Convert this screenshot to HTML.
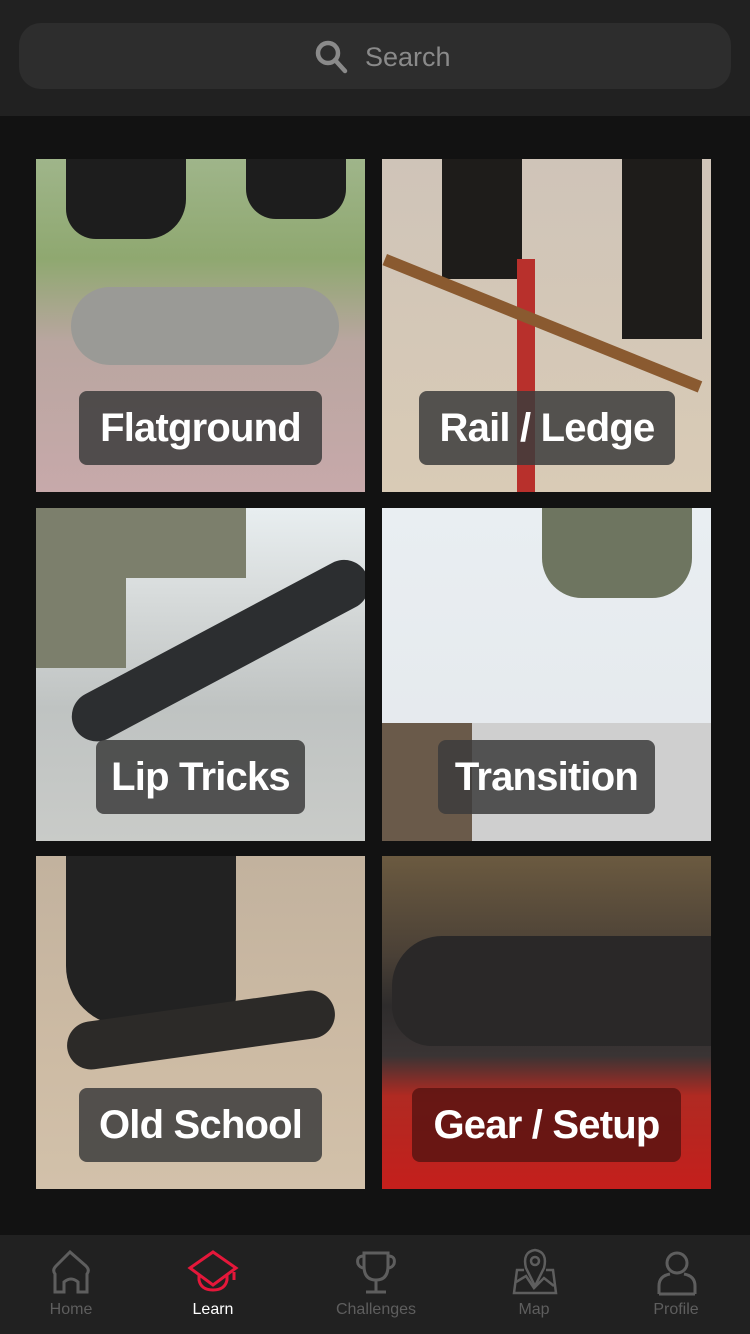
<!DOCTYPE html>
<html><head><meta charset="utf-8"><style>
*{margin:0;padding:0;box-sizing:border-box}
body{width:750px;height:1334px;background:#121212;font-family:"Liberation Sans",sans-serif;position:relative;overflow:hidden}
.hdr{position:absolute;left:0;top:0;width:750px;height:116px;background:#212121}
.sb{position:absolute;left:19px;top:23px;width:712px;height:66px;border-radius:22px;background:#2d2d2d}
.sb span{position:absolute;left:346px;top:19px;font-size:27px;color:#8a8a8a}
.t{position:absolute;width:329px;height:333px;overflow:hidden}
.l{position:absolute;height:74px;border-radius:8px;background:rgba(60,60,60,.85);color:#fff;font-weight:bold;font-size:40px;letter-spacing:-0.8px;text-align:center;line-height:74px;white-space:nowrap}
.tab{position:absolute;left:0;top:1235px;width:750px;height:99px;background:#212121}
.tl{position:absolute;top:1301px;font-size:16px;color:#5e5e5e;width:120px;text-align:center}
svg{position:absolute}
</style></head><body>
<div class="hdr"><div class="sb">
<svg style="left:295px;top:16px" width="36" height="36" viewBox="0 0 36 36"><circle cx="14" cy="14" r="10" fill="none" stroke="#8a8a8a" stroke-width="4.5"/><path d="M21 21 L31 32" stroke="#8a8a8a" stroke-width="4.5" stroke-linecap="round"/></svg>
<span>Search</span></div></div>

<div class="t" style="left:36px;top:159px;background:linear-gradient(#9fb58a 0%,#8fa870 30%,#b9a6a0 55%,#c7a9aa 100%)">
<div style="position:absolute;left:35px;top:128px;width:268px;height:78px;border-radius:40px;background:#9a9a96"></div>
<div style="position:absolute;left:30px;top:0;width:120px;height:80px;background:#1d1d1d;border-radius:0 0 40px 30px"></div>
<div style="position:absolute;left:210px;top:0;width:100px;height:60px;background:#1d1d1d;border-radius:0 0 30px 30px"></div>
</div>
<div class="t" style="left:382px;top:159px;background:linear-gradient(#cfc4b8,#d9cbb6)">
<div style="position:absolute;left:60px;top:0;width:80px;height:120px;background:#1e1c1a"></div>
<div style="position:absolute;left:240px;top:0;width:80px;height:180px;background:#1e1c1a"></div>
<div style="position:absolute;left:135px;top:100px;width:18px;height:233px;background:#b8302c"></div>
<div style="position:absolute;width:340px;height:12px;background:#8a5a30;transform:rotate(22deg);transform-origin:0 0;left:5px;top:95px"></div>
</div>
<div class="t" style="left:36px;top:508px;background:linear-gradient(#e8eef0 0%,#d8dcdc 25%,#bfc3c2 60%,#c9cbc8 100%)">
<div style="position:absolute;left:0;top:0;width:90px;height:160px;background:#7c7f6c"></div>
<div style="position:absolute;left:90px;top:0;width:120px;height:70px;background:#7c7f6c"></div>
<div style="position:absolute;left:20px;top:120px;width:330px;height:50px;background:#2c2e30;border-radius:25px;transform:rotate(-28deg);transform-origin:160px 25px"></div>
</div>
<div class="t" style="left:382px;top:508px;background:linear-gradient(#e9eef2,#e4e8eb)">
<div style="position:absolute;left:0;top:215px;width:90px;height:118px;background:#6a5a4a"></div>
<div style="position:absolute;left:90px;top:215px;width:239px;height:118px;background:#cfcfcf"></div>
<div style="position:absolute;left:160px;top:0;width:150px;height:90px;background:#6e7560;border-radius:0 0 40px 40px"></div>
</div>
<div class="t" style="left:36px;top:856px;background:linear-gradient(#c2b29e,#cdbba4 60%,#d2c1aa)">
<div style="position:absolute;left:30px;top:0;width:170px;height:170px;background:#222;border-radius:0 0 30px 60px"></div>
<div style="position:absolute;left:30px;top:150px;width:270px;height:48px;background:#2c2a28;border-radius:24px;transform:rotate(-8deg)"></div>
</div>
<div class="t" style="left:382px;top:856px;background:linear-gradient(#6b5a40 0%,#4a4036 30%,#2e2c2c 45%,#3a3434 60%,#b02a22 72%,#c41f1c 100%)">
<div style="position:absolute;left:10px;top:80px;width:320px;height:110px;background:#2a2828;border-radius:50px 0 0 40px"></div>
</div>

<div class="l" style="left:79px;top:391px;width:243px">Flatground</div>
<div class="l" style="left:419px;top:391px;width:256px">Rail / Ledge</div>
<div class="l" style="left:96px;top:740px;width:209px">Lip Tricks</div>
<div class="l" style="left:438px;top:740px;width:217px">Transition</div>
<div class="l" style="left:79px;top:1088px;width:243px">Old School</div>
<div class="l" style="left:412px;top:1088px;width:269px;background:rgba(90,20,18,.85)">Gear / Setup</div>

<div class="tab"></div>
<svg style="left:50px;top:1250px" width="44" height="46" viewBox="0 0 44 46" fill="none" stroke="#5e5e5e" stroke-width="3"><path d="M5 42 L5 24 Q2 20 6 16 L20 2 L36 16 Q40 20 37 24 L37 42 L28 42 L28 32 Q21 26 14 32 L14 42 Z"/></svg>
<svg style="left:187px;top:1250px" width="54" height="44" viewBox="0 0 54 44" fill="none" stroke="#e5173a" stroke-width="3"><path d="M3 18 L26 2 L49 18 L26 35 Z"/><path d="M12 25 L12 30 Q14 40 26 40 Q38 40 40 30 L40 25"/><path d="M47 22 L47 30"/></svg>
<svg style="left:354px;top:1250px" width="44" height="44" viewBox="0 0 44 44" fill="none" stroke="#5e5e5e" stroke-width="3"><path d="M10 3 L34 3 L34 16 Q34 30 22 30 Q10 30 10 16 Z"/><path d="M10 6 Q2 6 4 14 Q6 18 10 18 M34 6 Q42 6 40 14 Q38 18 34 18"/><path d="M22 30 L22 42 M12 42 L32 42"/></svg>
<svg style="left:512px;top:1248px" width="46" height="48" viewBox="0 0 46 48" fill="none" stroke="#5e5e5e" stroke-width="2.5"><path d="M23 38 L14 20 Q10 4 23 2 Q36 4 32 20 Z"/><circle cx="23" cy="13" r="4"/><path d="M12 22 L5 22 L2 45 L44 45 L41 22 L34 22"/><path d="M4 34 L14 28 L22 40 L32 30 L42 38"/></svg>
<svg style="left:656px;top:1250px" width="42" height="46" viewBox="0 0 42 46" fill="none" stroke="#5e5e5e" stroke-width="3"><circle cx="21" cy="13" r="10"/><path d="M3 44 L3 36 Q3 26 14 24 M39 44 L39 36 Q39 26 28 24 M3 44 L39 44"/></svg>
<div class="tl" style="left:11px">Home</div>
<div class="tl" style="left:153px;color:#fff">Learn</div>
<div class="tl" style="left:316px">Challenges</div>
<div class="tl" style="left:474px">Map</div>
<div class="tl" style="left:616px">Profile</div>
</body></html>
